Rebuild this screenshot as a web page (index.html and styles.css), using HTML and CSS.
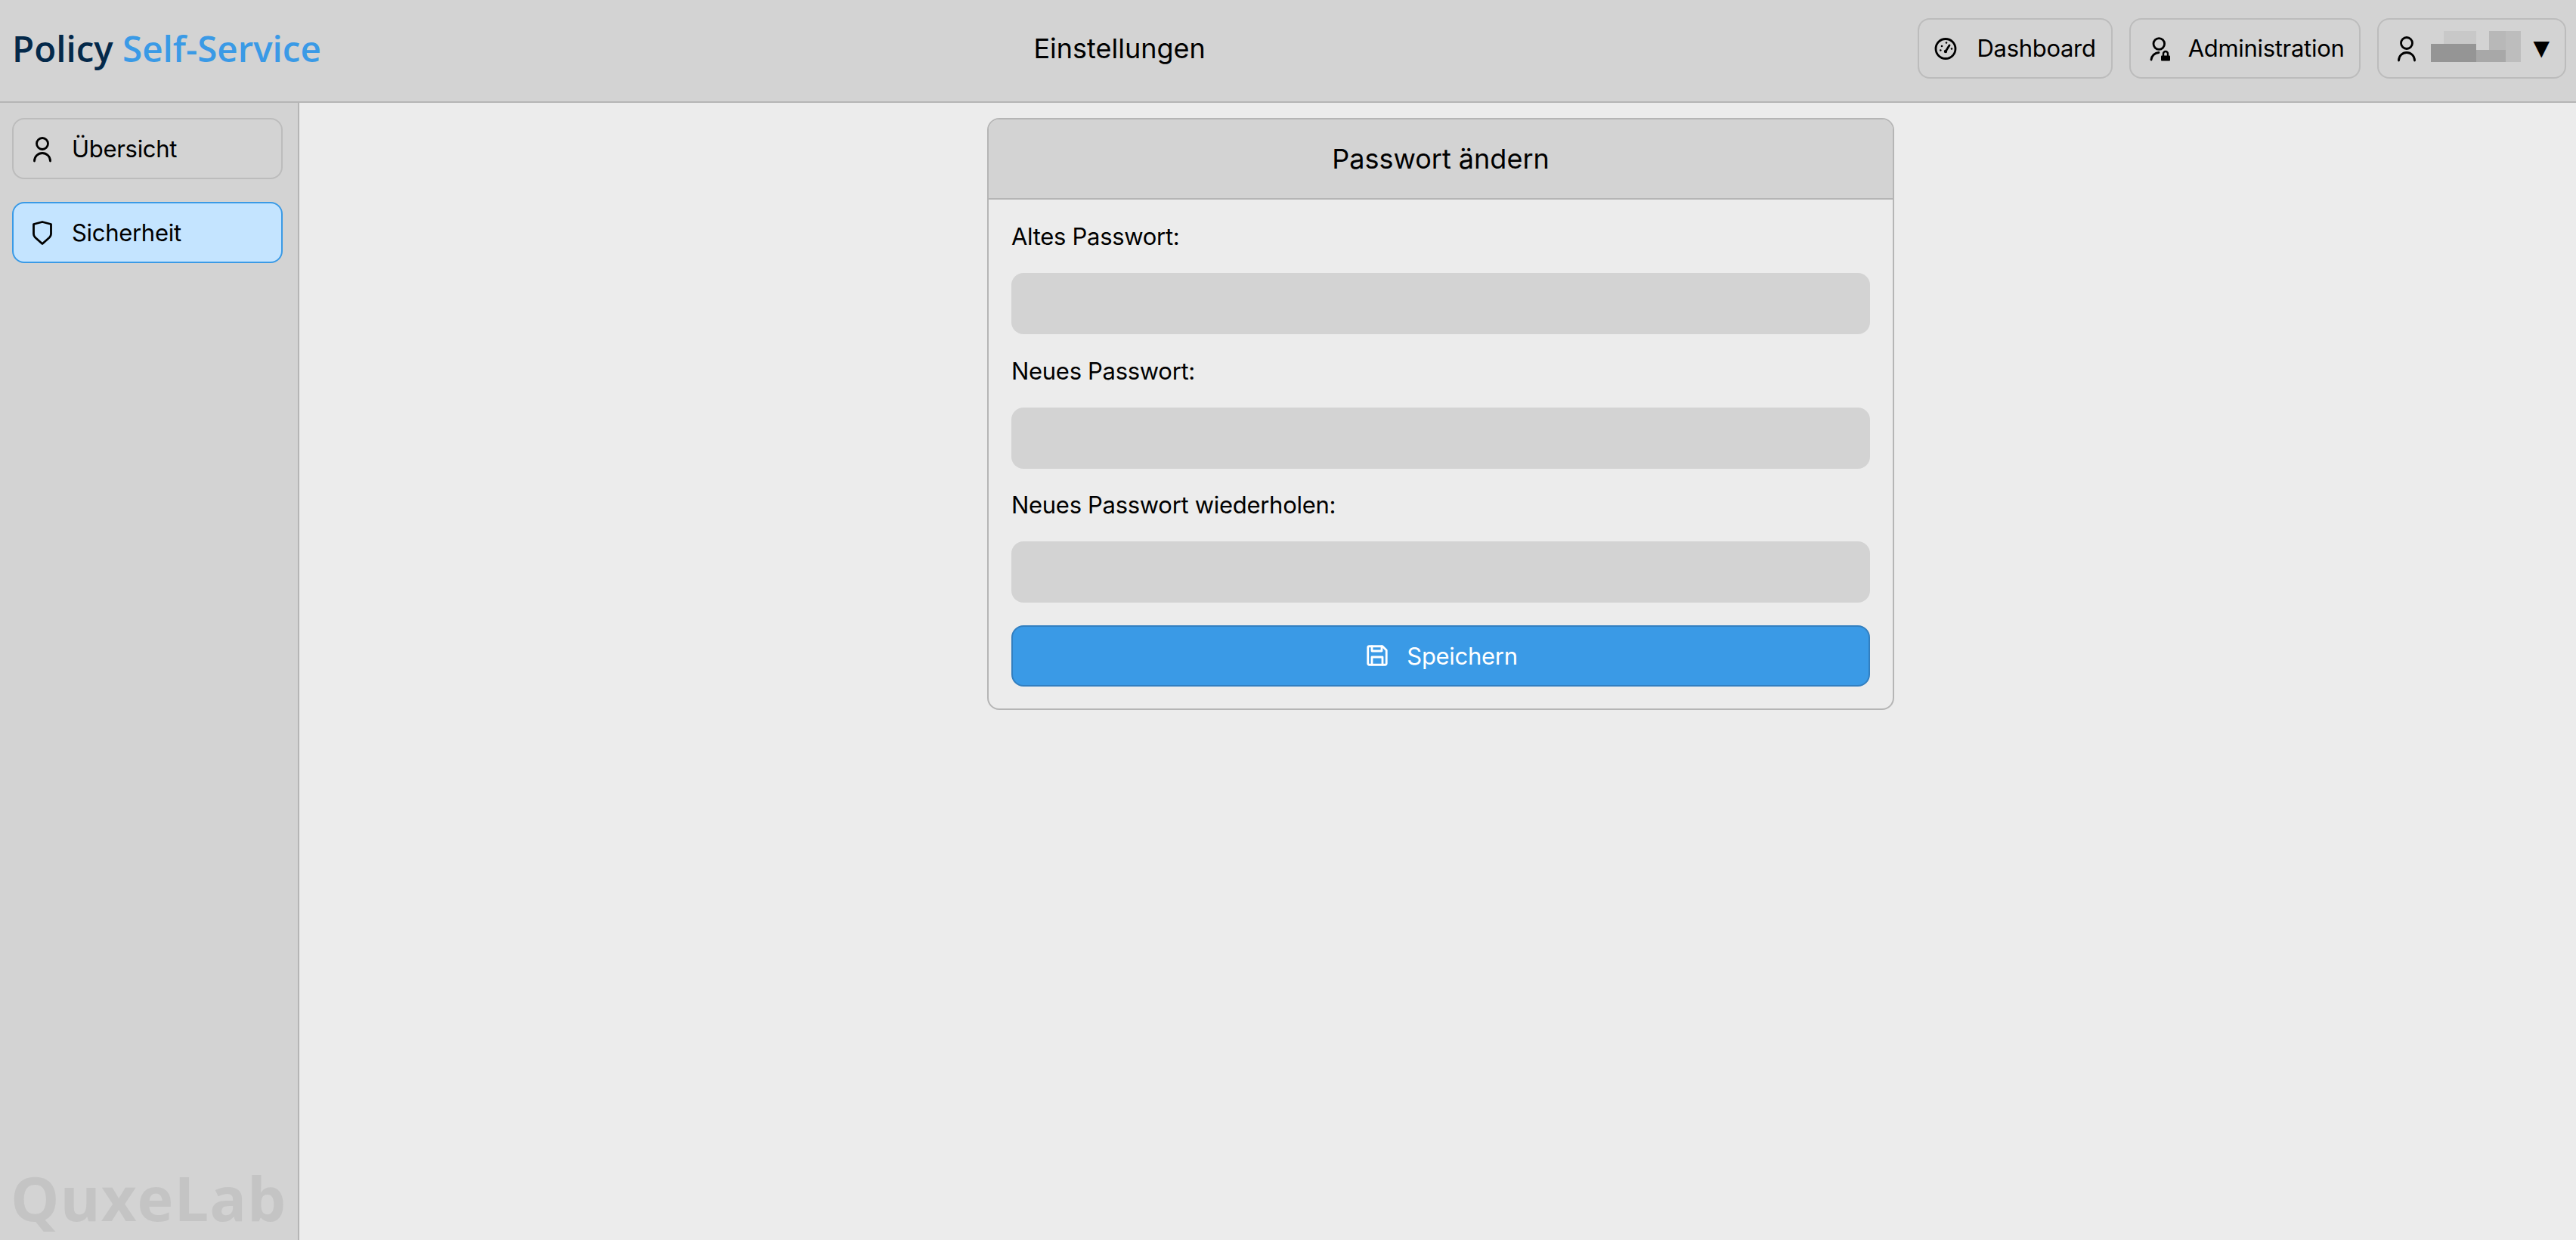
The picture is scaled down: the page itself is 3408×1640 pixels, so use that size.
FILE: index.html
```html
<!DOCTYPE html>
<html lang="de">
<head>
<meta charset="utf-8">
<title>Einstellungen</title>
<link rel="stylesheet" href="styles.css">
</head>
<body>
<header class="topbar">
  <div class="logo"><span class="logo-dark">Policy</span> <span class="logo-blue">Self-Service</span></div>
  <div class="page-title">Einstellungen</div>
  <nav class="actions">
    <a class="btn"><svg class="icon" viewBox="0 0 36 36"><circle cx="18" cy="18.5" r="13"/><path d="M18 22l5-8"/><circle class="fill" cx="18" cy="22" r="2.2"/><g class="dots"><circle cx="13" cy="15" r="1.3"/><circle cx="19" cy="10.5" r="1.3"/><circle cx="11.3" cy="20.5" r="1.3"/><circle cx="26" cy="18.5" r="1.3"/></g></svg>Dashboard</a>
    <a class="btn"><svg class="icon" viewBox="0 0 36 36"><circle cx="20.3" cy="12" r="7.3"/><path d="M10 33a10.5 10.5 0 0 1 10-9.5"/><rect class="fill solid" x="23" y="27.5" width="12" height="7" rx="1"/><path class="thin" d="M26 28v-3a3 3 0 0 1 6 0v3"/></svg>Administration</a>
    <a class="btn user"><svg class="icon" viewBox="0 0 36 36"><circle cx="18" cy="11" r="7.5"/><path d="M7.5 34a10.5 10.5 0 0 1 21 0"/></svg>
      <span class="mosaic"><i class="m1"></i><i class="m2"></i><i class="m3"></i><i class="m4"></i><i class="m5"></i></span>
      <span class="caret">▼</span></a>
  </nav>
</header>
<div class="layout">
  <aside class="sidebar">
    <a class="side-item"><svg class="icon" viewBox="0 0 36 36"><circle cx="18" cy="11" r="7.5"/><path d="M7.5 34a10.5 10.5 0 0 1 21 0"/></svg>Übersicht</a>
    <a class="side-item active"><svg class="icon" viewBox="0 0 36 36"><path d="M18 3.5L29.5 6.5V19.5Q29.5 22 27.5 24L18 32.5 8.5 24Q6.5 22 6.5 19.5V6.5Z"/></svg>Sicherheit</a>
    <div class="watermark">QuxeLab</div>
  </aside>
  <main class="content">
    <section class="card">
      <h2 class="card-head">Passwort ändern</h2>
      <form class="card-body">
        <label class="field-label">Altes Passwort:</label>
        <div class="input"></div>
        <label class="field-label">Neues Passwort:</label>
        <div class="input"></div>
        <label class="field-label">Neues Passwort wiederholen:</label>
        <div class="input"></div>
        <button class="save" type="button"><svg class="icon" viewBox="0 0 36 36"><path d="M7.5 5.75H25L30.25 11V28.5a1.75 1.75 0 0 1-1.75 1.75H7.5a1.75 1.75 0 0 1-1.75-1.75V7.5a1.75 1.75 0 0 1 1.75-1.75z"/><path d="M11 6V12H24V6M11 30V20H25V30"/></svg>Speichern</button>
      </form>
    </section>
  </main>
</div>
</body>
</html>
```
FILE: styles.css
```css
* { box-sizing: border-box; }
html, body { margin: 0; height: 100%; }
body { font-family: Inter, "Noto Sans", sans-serif; font-size: 31px; letter-spacing: -0.3px; color: #000; background: #ececec; display: flex; flex-direction: column; overflow: hidden; }
.topbar { height: 136px; flex: none; display: flex; align-items: center; justify-content: space-between; padding: 0 13px 7px 16px; background: #d3d3d3; border-bottom: 2px solid #b5b5b5; }
.logo { font-family: "Open Sans", sans-serif; font-size: 47.5px; font-weight: 600; line-height: 1; letter-spacing: 0; white-space: pre; }
.logo-dark { color: #04294a; }
.logo-blue { color: #3a9ae6; }
.page-title { font-size: 36px; letter-spacing: 0; }
.actions { display: flex; gap: 22px; }
.btn { height: 80px; display: flex; align-items: center; gap: 23px; padding: 0 20px 0 17px; border: 2px solid #bcbcbc; border-radius: 16px; white-space: nowrap; }
.icon { width: 36px; height: 36px; flex: none; fill: none; stroke: currentColor; stroke-width: 2.8; stroke-linecap: round; stroke-linejoin: round; }
.icon .fill { fill: currentColor; stroke: none; }
.icon .dots { fill: currentColor; stroke: none; }
.icon .thin { stroke-width: 2.4; }
.user { padding-left: 19px; gap: 0; }
.mosaic { position: relative; width: 119px; height: 41px; margin: 0 16px 4px 14px; flex: none; }
.mosaic i { position: absolute; display: block; }
.m1 { left: 17px; top: 0; width: 43px; height: 17px; background: #c8c8c8; }
.m2 { left: 0; top: 17px; width: 60px; height: 24px; background: #959595; }
.m3 { left: 60px; top: 25px; width: 39px; height: 16px; background: #a8a8a8; }
.m4 { left: 77px; top: 0; width: 22px; height: 25px; background: #b8b8b8; }
.m5 { left: 99px; top: 0; width: 20px; height: 41px; background: #bdbdbd; }
.caret { font-family: "DejaVu Sans", sans-serif; font-size: 28px; letter-spacing: 0; }
.layout { flex: 1; display: flex; min-height: 0; }
.sidebar { width: 396px; flex: none; position: relative; display: flex; flex-direction: column; gap: 30px; padding: 20px 20px 0 16px; background: #d3d3d3; border-right: 2px solid #b5b5b5; }
.side-item { height: 81px; display: flex; align-items: center; gap: 21px; padding: 0 20px; border: 2px solid #bcbcbc; border-radius: 16px; }
.side-item.active { background: #c4e4ff; border-color: #3a9ae6; }
.watermark { position: absolute; left: 14px; bottom: 16px; font-family: "Open Sans", sans-serif; font-weight: 700; font-size: 81px; line-height: 1; color: #c4c4c4; letter-spacing: 1px; }
.content { flex: 1; padding-top: 20px; display: flex; justify-content: center; align-items: flex-start; }
.card { width: 1200px; margin-left: 8px; border: 2px solid #b5b5b5; border-radius: 16px; overflow: hidden; }
.card-head { margin: 0; height: 106px; display: flex; align-items: center; justify-content: center; background: #d3d3d3; border-bottom: 2px solid #b5b5b5; font-size: 36px; font-weight: 400; letter-spacing: 0; }
.card-body { padding: 30px 30px 29px; display: flex; flex-direction: column; }
.field-label { line-height: 38px; margin-bottom: 29px; }
.input { height: 81px; margin-bottom: 29.5px; background: #d3d3d3; border-radius: 16px; }
.save { height: 81px; display: flex; align-items: center; justify-content: center; gap: 21px; color: #fff; background: #3a9ae6; border: 2px solid #327fc0; border-radius: 16px; font: inherit; letter-spacing: inherit; }
```
